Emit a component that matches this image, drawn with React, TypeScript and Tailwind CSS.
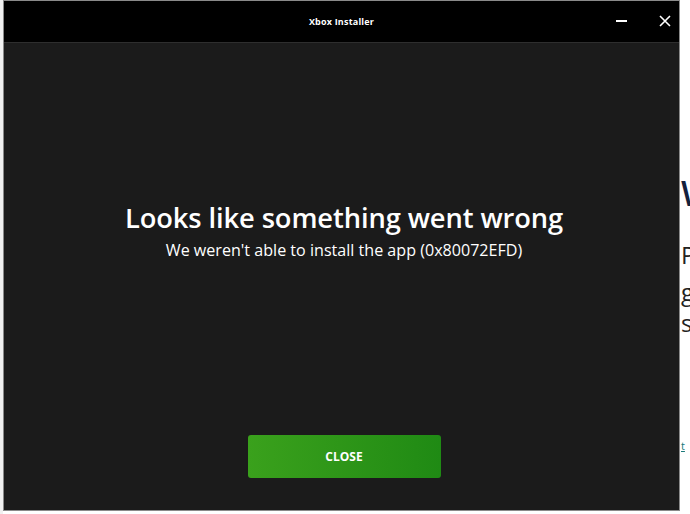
import React from "react";

export default function App() {
  return (
    <div className="w-[690px] h-[514px] bg-white flex overflow-hidden" style={{ fontFamily: '"Open Sans", "Noto Sans", sans-serif' }}>
      <div className="w-[3px] h-full bg-[#f0f0f0]" />
      <div className="w-[677px] h-[511px] border border-[#8a8a8a] flex flex-col bg-[#1b1b1b]">
        <div className="h-[42px] bg-black flex items-center relative border-b border-[#2e2e2e]">
          <div className="flex-1 text-center text-white text-[9px] font-bold tracking-[0.2px]">Xbox Installer</div>
          <div className="absolute right-[52px] top-[19px] w-[11px] h-[2px] bg-white" />
          <svg className="absolute right-[8px] top-[14px]" width="12" height="12" viewBox="0 0 12 12">
            <path d="M1 1 L11 11 M11 1 L1 11" stroke="white" strokeWidth="1.6" />
          </svg>
        </div>
        <div className="flex-1 flex flex-col items-center pl-[5px]">
          <div className="mt-[158px] text-white text-[27.3px] font-semibold leading-[34px] tracking-[-0.1px]">Looks like something went wrong</div>
          <div className="mt-[3px] text-white text-[16.1px] leading-[24px]">We weren't able to install the app (0x80072EFD)</div>
          <button className="mt-[173px] w-[193px] h-[43px] rounded-[3px] bg-gradient-to-r from-[#3aa11c] to-[#1f8a14] text-white text-[12px] font-bold flex items-center justify-center">CLOSE</button>
        </div>
      </div>
      <div className="flex-1 h-full relative overflow-hidden bg-white">
        <div className="absolute left-[1px] top-[176px] text-[#14213d] text-[34px] font-semibold leading-none">W</div>
        <div className="absolute left-[1px] top-[243px] text-[#222] text-[24px] leading-none">P</div>
        <div className="absolute left-[1px] top-[280px] text-[#222] text-[24px] leading-none">g</div>
        <div className="absolute left-[1px] top-[311px] text-[#222] text-[24px] leading-none">s</div>
        <div className="absolute left-[1px] top-[440px] text-[#1a7a7a] text-[11px] leading-none underline">t</div>
      </div>
    </div>
  );
}
